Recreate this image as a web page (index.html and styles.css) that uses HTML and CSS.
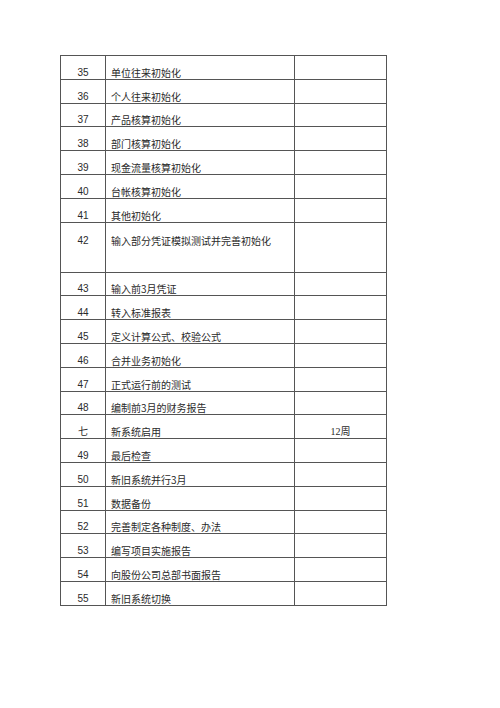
FILE: index.html
```html
<!DOCTYPE html>
<html lang="zh">
<head>
<meta charset="utf-8">
<link rel="stylesheet" href="styles.css">
</head>
<body>
<table class="plan">
<colgroup><col class="c-no"><col class="c-task"><col class="c-time"></colgroup>
<tbody>
<tr><td class="no">35</td><td class="task">单位往来初始化</td><td class="time"></td></tr>
<tr><td class="no">36</td><td class="task">个人往来初始化</td><td class="time"></td></tr>
<tr><td class="no">37</td><td class="task">产品核算初始化</td><td class="time"></td></tr>
<tr><td class="no">38</td><td class="task">部门核算初始化</td><td class="time"></td></tr>
<tr><td class="no">39</td><td class="task">现金流量核算初始化</td><td class="time"></td></tr>
<tr><td class="no">40</td><td class="task">台帐核算初始化</td><td class="time"></td></tr>
<tr><td class="no">41</td><td class="task">其他初始化</td><td class="time"></td></tr>
<tr class="tall"><td class="no">42</td><td class="task">输入部分凭证模拟测试并完善初始化</td><td class="time"></td></tr>
<tr><td class="no">43</td><td class="task">输入前3月凭证</td><td class="time"></td></tr>
<tr><td class="no">44</td><td class="task">转入标准报表</td><td class="time"></td></tr>
<tr><td class="no">45</td><td class="task">定义计算公式、校验公式</td><td class="time"></td></tr>
<tr><td class="no">46</td><td class="task">合并业务初始化</td><td class="time"></td></tr>
<tr><td class="no">47</td><td class="task">正式运行前的测试</td><td class="time"></td></tr>
<tr><td class="no">48</td><td class="task">编制前3月的财务报告</td><td class="time"></td></tr>
<tr><td class="no">七</td><td class="task">新系统启用</td><td class="time">12周</td></tr>
<tr><td class="no">49</td><td class="task">最后检查</td><td class="time"></td></tr>
<tr><td class="no">50</td><td class="task">新旧系统并行3月</td><td class="time"></td></tr>
<tr><td class="no">51</td><td class="task">数据备份</td><td class="time"></td></tr>
<tr><td class="no">52</td><td class="task">完善制定各种制度、办法</td><td class="time"></td></tr>
<tr><td class="no">53</td><td class="task">编写项目实施报告</td><td class="time"></td></tr>
<tr><td class="no">54</td><td class="task">向股份公司总部书面报告</td><td class="time"></td></tr>
<tr><td class="no">55</td><td class="task">新旧系统切换</td><td class="time"></td></tr>
</tbody>
</table>
</body>
</html>
```
FILE: styles.css
```css
html, body {
  margin: 0;
  padding: 0;
  background: #ffffff;
}
body {
  font-family: "Noto Sans CJK SC", "Liberation Serif", serif;
  color: #2a2a2a;
}
.plan {
  margin: 55px 0 0 60px;
  border-collapse: collapse;
  table-layout: fixed;
  width: 326px;
}
.c-no { width: 45px; }
.c-task { width: 189px; }
.c-time { width: 92px; }
.plan td {
  border: 1px solid #555;
  height: 23.8px;
  padding: 0;
  box-sizing: border-box;
  font-size: 10px;
  line-height: 12px;
  vertical-align: bottom;
  white-space: nowrap;
}
.plan .no {
  text-align: center;
  font-family: "Liberation Sans", "Noto Sans CJK SC", sans-serif;
  font-size: 10px;
}
.plan .task {
  padding-left: 5px;
}
.plan .time {
  text-align: center;
  font-family: "Liberation Serif", "Noto Sans CJK SC", serif;
}
.plan .tall td {
  height: 50px;
  vertical-align: top;
  padding-top: 12px;
}
```
